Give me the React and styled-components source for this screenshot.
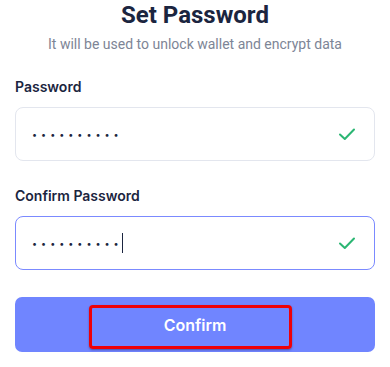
import React from 'react';
import styled, { createGlobalStyle } from 'styled-components';

const GlobalStyle = createGlobalStyle`
  html, body {
    margin: 0;
    padding: 0;
    background: #ffffff;
  }
  body {
    font-family: Inter, Roboto, "Liberation Sans", sans-serif;
    color: #1b2540;
  }
`;

const Page = styled.div`
  width: 390px;
  height: 367px;
  box-sizing: border-box;
  padding: 0 15px;
  display: flex;
  flex-direction: column;
`;

const Title = styled.h1`
  margin: 0;
  font-family: Roboto, "Liberation Sans", sans-serif;
  font-size: 24px;
  line-height: 30px;
  font-weight: 700;
  text-align: center;
  color: #1b2540;
`;

const Subtitle = styled.p`
  margin: 6px 0 0;
  font-family: Roboto, "Liberation Sans", sans-serif;
  font-size: 14px;
  line-height: 17px;
  text-align: center;
  color: #7d8596;
`;

const Field = styled.div`
  display: flex;
  flex-direction: column;
  margin-top: ${p => p.$top}px;
`;

const Label = styled.label`
  font-size: 14px;
  line-height: 18px;
  font-weight: 600;
  color: #1b2540;
`;

const InputBox = styled.div`
  margin-top: 11px;
  height: 54px;
  box-sizing: border-box;
  border: 1px solid ${p => (p.$focused ? '#7b8aff' : '#e3e6ee')};
  border-radius: 8px;
  display: flex;
  align-items: center;
  padding: 0 18px 0 16px;
`;

const Dots = styled.span`
  font-size: 9px;
  letter-spacing: 4px;
  color: #1b2540;
  line-height: 1;
`;

const Caret = styled.span`
  width: 1px;
  height: 20px;
  background: #1b2540;
  margin-left: -1px;
`;

const Spacer = styled.div`
  flex: 1;
`;

const Check = () => (
  <svg width="18" height="14" viewBox="0 0 18 14" fill="none">
    <path d="M2 7.5 L6.8 12 L16 2.5" stroke="#2bb673" strokeWidth="2" strokeLinecap="round" strokeLinejoin="round" />
  </svg>
);

const Button = styled.button`
  margin-top: 27px;
  height: 55px;
  border: none;
  border-radius: 7px;
  background: #7085ff;
  color: #ffffff;
  font-family: Inter, Roboto, "Liberation Sans", sans-serif;
  font-size: 16px;
  font-weight: 600;
  position: relative;
  display: flex;
  align-items: center;
  justify-content: center;
  padding: 0;
`;

const Highlight = styled.span`
  position: absolute;
  left: 74px;
  top: 8px;
  width: 203px;
  height: 44px;
  box-sizing: border-box;
  border: 3px solid #ee0008;
  border-radius: 4px;
  box-shadow: 0 1px 2px rgba(40, 30, 80, 0.5);
`;

const ButtonText = styled.span`
  position: relative;
`;

export default function App() {
  return (
    <>
      <GlobalStyle />
      <Page>
        <Title>Set Password</Title>
        <Subtitle>It will be used to unlock wallet and encrypt data</Subtitle>
        <Field $top={25}>
          <Label>Password</Label>
          <InputBox>
            <Dots>••••••••••</Dots>
            <Spacer />
            <Check />
          </InputBox>
        </Field>
        <Field $top={26}>
          <Label>Confirm Password</Label>
          <InputBox $focused>
            <Dots>••••••••••</Dots>
            <Caret />
            <Spacer />
            <Check />
          </InputBox>
        </Field>
        <Button>
          <Highlight />
          <ButtonText>Confirm</ButtonText>
        </Button>
      </Page>
    </>
  );
}
